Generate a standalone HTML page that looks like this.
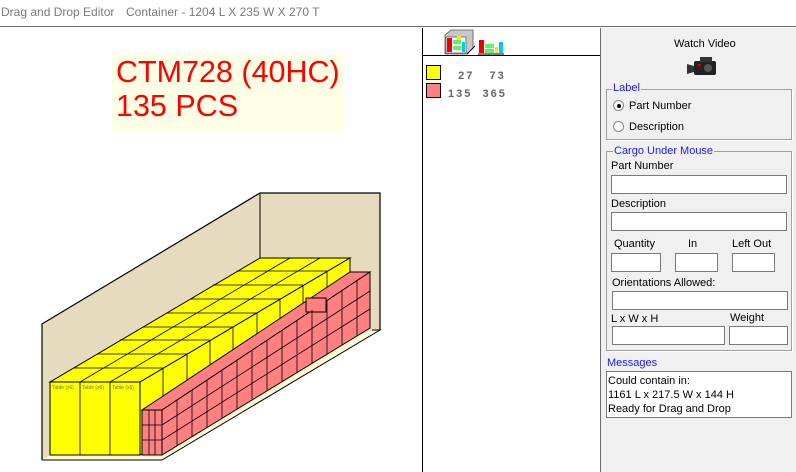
<!DOCTYPE html>
<html><head><meta charset="utf-8"><style>
*{margin:0;padding:0;box-sizing:border-box}
body{width:796px;height:472px;overflow:hidden;background:#fff;font-family:"Liberation Sans",sans-serif;position:relative}
.a{position:absolute}
.t{font-size:11px;color:#000;white-space:nowrap}
.in{position:absolute;background:#fff;border:1px solid #7a7a7a}
.fs{position:absolute;border:1px solid #a0a0a0;box-shadow:1px 1px 0 #fff}
.lg{position:absolute;background:#f0f0f0;color:#1a1aff;font-size:11px;padding:0 1px;white-space:nowrap}
</style></head><body>
<div class="a" style="left:0;top:0;width:796px;height:27px;background:#fff;border-bottom:1px solid #6d6d6d"></div>
<div class="a" style="left:1px;top:5px;font-size:12px;color:#7a7a7a;white-space:nowrap">Drag and Drop Editor</div>
<div class="a" style="left:126px;top:5px;font-size:12px;color:#7a7a7a;white-space:nowrap">Container - 1204 L X 235 W X 270 T</div>

<div class="a" style="left:422px;top:28px;width:1px;height:444px;background:#000"></div>
<div class="a" style="left:600px;top:28px;width:196px;height:444px;background:#f0f0f0;border-left:1px solid #6d6d6d"></div>

<div class="a" style="left:112px;top:53px;width:232px;height:78px;background:#ffffe6"></div>
<div class="a" style="left:116px;top:55px;font-size:30.5px;color:#ff0000;line-height:34px;white-space:nowrap">CTM728 (40HC)<br>135 PCS</div>

<svg class="a" style="left:0;top:0" width="422" height="472">
<polygon points="260,193 380,193 380,330 42,460 42,324" fill="#e6dbbe"/>
<polygon points="42,460 162,460 380,330 372,330 50,455" fill="#fff9d6"/>
<polyline points="42,460 42,324 260,193 380,193 380,330" fill="none" stroke="#000" stroke-width="1.2"/>
<line x1="260" y1="193" x2="260" y2="330" stroke="#000"/>
<polyline points="42,460 162,460 380,330 372,330" fill="none" stroke="#000"/>
<!-- yellow -->
<polygon points="50,382 140,382 350,258 260,258" fill="#ffff00" stroke="#000"/>
<polygon points="140,382 350,258 350,330 140,455" fill="#ffff00" stroke="#000"/>
<rect x="50" y="382" width="90" height="73" fill="#ffff00" stroke="#000"/>
<g stroke="#000" stroke-width="0.8">
<line x1="80" y1="382" x2="290" y2="258"/><line x1="110" y1="382" x2="320" y2="258"/>
<line x1="80" y1="382" x2="80" y2="455"/><line x1="110" y1="382" x2="110" y2="455"/>
<line x1="73" y1="368" x2="163" y2="368"/><line x1="97" y1="354" x2="187" y2="354"/>
<line x1="120" y1="340" x2="210" y2="340"/><line x1="143" y1="327" x2="233" y2="327"/>
<line x1="167" y1="313" x2="257" y2="313"/><line x1="190" y1="299" x2="280" y2="299"/>
<line x1="213" y1="285" x2="303" y2="285"/><line x1="237" y1="271" x2="327" y2="271"/>
<line x1="163" y1="368" x2="163" y2="440"/><line x1="187" y1="354" x2="187" y2="425"/>
<line x1="210" y1="340" x2="210" y2="411"/><line x1="233" y1="327" x2="233" y2="397"/>
<line x1="257" y1="313" x2="257" y2="383"/><line x1="280" y1="299" x2="280" y2="369"/>
<line x1="303" y1="285" x2="303" y2="355"/><line x1="327" y1="271" x2="327" y2="341"/>
</g>
<g font-size="5" fill="#776">
<text x="52" y="389">Table (x6)</text><text x="82" y="389">Table (x6)</text><text x="112" y="389">Table (x6)</text></g>
<!-- pink -->
<polygon points="142,410 162,410 370,272 350,272" fill="#ff8080" stroke="#000"/>
<polygon points="162,410 370,272 370,328 162,455" fill="#ff8080" stroke="#000"/>
<rect x="142" y="410" width="20" height="45" fill="#ff8080" stroke="#000"/>
<rect x="306" y="298" width="20" height="14" fill="#ff8080" stroke="#000"/>
<g stroke="#000" stroke-width="0.8">
<line x1="162" y1="425" x2="370" y2="291"/><line x1="162" y1="440" x2="370" y2="309"/>
<line x1="142" y1="425" x2="162" y2="425"/><line x1="142" y1="440" x2="162" y2="440"/>
<line x1="149" y1="410" x2="149" y2="455"/><line x1="155" y1="410" x2="155" y2="455"/>
<line x1="177" y1="400" x2="177" y2="446"/><line x1="192" y1="390" x2="192" y2="437"/>
<line x1="207" y1="380" x2="207" y2="427"/><line x1="222" y1="370" x2="222" y2="418"/>
<line x1="237" y1="360" x2="237" y2="409"/><line x1="252" y1="350" x2="252" y2="399"/>
<line x1="267" y1="340" x2="267" y2="390"/><line x1="282" y1="330" x2="282" y2="381"/>
<line x1="297" y1="320" x2="297" y2="372"/><line x1="312" y1="310" x2="312" y2="363"/>
<line x1="327" y1="300" x2="327" y2="354"/><line x1="342" y1="290" x2="342" y2="345"/>
<line x1="357" y1="280" x2="357" y2="336"/>
</g>
</svg>

<!-- middle -->
<div class="a" style="left:423px;top:55px;width:177px;height:1px;background:#000"></div>
<svg class="a" style="left:443px;top:28px" width="70" height="28">
<polygon points="2,7 8,2 30,2 30,20 24,26 2,26" fill="#c8c8c8" stroke="#555" stroke-width="0.8"/>
<line x1="24" y1="26" x2="32" y2="18" stroke="#000"/>
<rect x="3" y="9" width="20" height="16" fill="#fff" stroke="#333" stroke-width="0.6"/>
<rect x="4" y="10" width="5" height="14" fill="#e00"/><rect x="10" y="12" width="8" height="4" fill="#6e6"/><rect x="10" y="18" width="8" height="4" fill="#6e6"/><rect x="19" y="14" width="3" height="10" fill="#0cd"/>
<rect x="14" y="8" width="4" height="4" fill="#ee0"/>
<rect x="36" y="12" width="5" height="13" fill="#e00"/><rect x="42" y="16" width="9" height="4" fill="#6e6"/><rect x="42" y="21" width="9" height="4" fill="#6e6"/><rect x="52" y="19" width="3" height="6" fill="#ee0"/><rect x="56" y="14" width="4" height="11" fill="#0cd"/>
<line x1="35" y1="26" x2="61" y2="26" stroke="#000"/>
</svg>
<div class="a" style="left:426px;top:65px;width:15px;height:15px;background:#ffff00;border:1px solid #000"></div>
<div class="a" style="left:426px;top:83px;width:15px;height:15px;background:#ff8080;border:1px solid #000"></div>
<div class="a" style="left:448px;top:67px;width:58px;font-size:11px;font-weight:bold;color:#666;letter-spacing:2px;line-height:18px;white-space:pre">  27   73
135  365</div>

<!-- right -->
<div class="a t" style="left:674px;top:38px">Watch Video</div>
<svg class="a" style="left:686px;top:55px" width="34" height="22">
<rect x="8" y="6" width="22" height="14" rx="2" fill="#222"/><rect x="14" y="2" width="12" height="5" fill="#333"/>
<polygon points="1,9 8,11 8,17 1,19" fill="#333"/><circle cx="22" cy="13" r="4" fill="#555"/><rect x="12" y="9" width="3" height="2" fill="#c00"/>
</svg>
<div class="fs" style="left:606px;top:89px;width:186px;height:51px"></div>
<div class="lg" style="left:612px;top:82px">Label</div>
<div class="a" style="left:613px;top:100px;width:11px;height:11px;border-radius:50%;background:#fff;border:1px solid #888"></div>
<div class="a" style="left:617px;top:104px;width:4px;height:4px;border-radius:50%;background:#000"></div>
<div class="a t" style="left:629px;top:100px">Part Number</div>
<div class="a" style="left:613px;top:121px;width:11px;height:11px;border-radius:50%;background:#fff;border:1px solid #888"></div>
<div class="a t" style="left:629px;top:121px">Description</div>

<div class="fs" style="left:606px;top:151px;width:186px;height:200px"></div>
<div class="lg" style="left:613px;top:145px">Cargo Under Mouse</div>
<div class="a t" style="left:611px;top:160px">Part Number</div>
<div class="in" style="left:611px;top:175px;width:176px;height:19px"></div>
<div class="a t" style="left:611px;top:198px">Description</div>
<div class="in" style="left:611px;top:212px;width:176px;height:19px"></div>
<div class="a t" style="left:614px;top:238px">Quantity</div>
<div class="a t" style="left:688px;top:238px">In</div>
<div class="a t" style="left:732px;top:238px">Left Out</div>
<div class="in" style="left:611px;top:253px;width:50px;height:19px"></div>
<div class="in" style="left:675px;top:253px;width:43px;height:19px"></div>
<div class="in" style="left:732px;top:253px;width:43px;height:19px"></div>
<div class="a t" style="left:612px;top:277px">Orientations Allowed:</div>
<div class="in" style="left:612px;top:291px;width:176px;height:19px"></div>
<div class="a t" style="left:611px;top:313px">L x W x H</div>
<div class="a t" style="left:730px;top:312px">Weight</div>
<div class="in" style="left:612px;top:326px;width:113px;height:19px"></div>
<div class="in" style="left:729px;top:326px;width:59px;height:19px"></div>

<div class="a" style="left:607px;top:357px;font-size:11px;color:#1a1aff">Messages</div>
<div class="in" style="left:606px;top:371px;width:186px;height:47px"></div>
<div class="a t" style="left:608px;top:374px;line-height:14px">Could contain in:<br>1161 L x 217.5 W x 144 H<br>Ready for Drag and Drop</div>
</body></html>
